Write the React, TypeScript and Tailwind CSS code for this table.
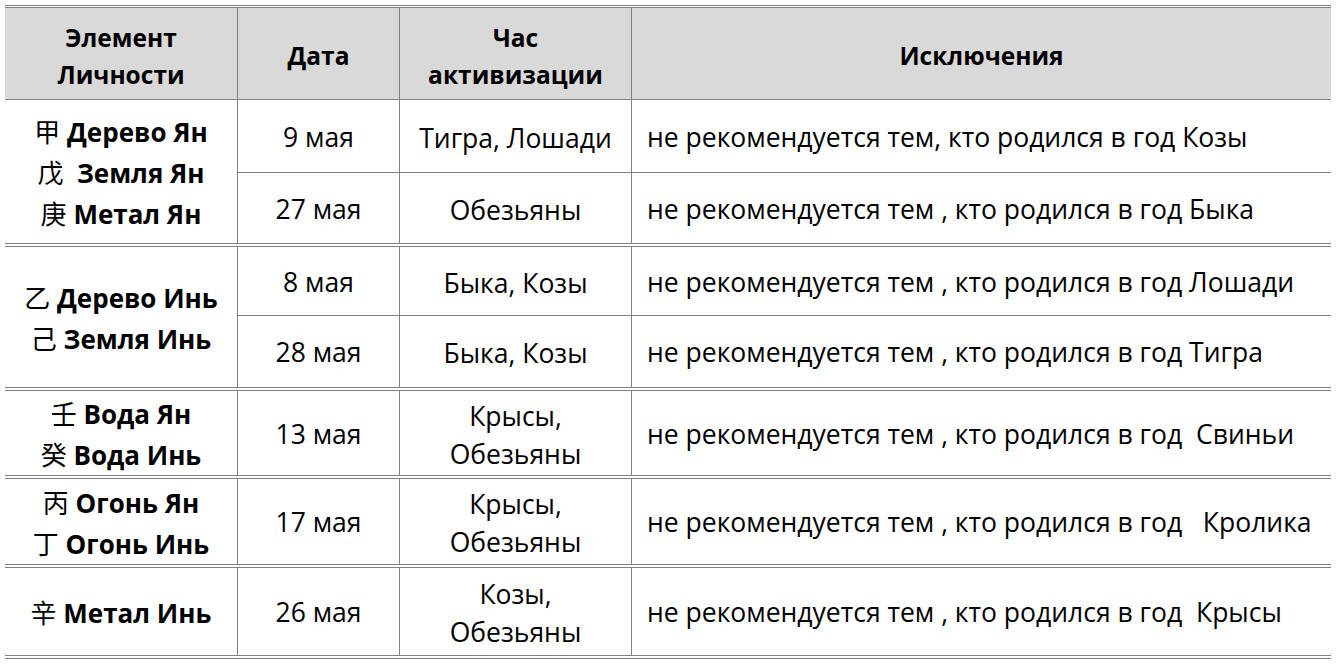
import React from "react";

const FONT = { fontFamily: '"Open Sans", "Noto Sans CJK SC", sans-serif' };

type Sub = { date: string; hour: string[]; exc: string; h: string };
type Group = { el: [string, string][]; subs: Sub[] };

const groups: Group[] = [
  {
    el: [
      ["甲", " Дерево Ян"],
      ["戊", "  Земля Ян"],
      ["庚", " Метал Ян"],
    ],
    subs: [
      { date: "9 мая", hour: ["Тигра, Лошади"], exc: "не рекомендуется тем, кто родился в год Козы", h: "h-[73px] border-b" },
      { date: "27 мая", hour: ["Обезьяны"], exc: "не рекомендуется тем , кто родился в год Быка", h: "h-[70px]" },
    ],
  },
  {
    el: [
      ["乙", " Дерево Инь"],
      ["己", " Земля Инь"],
    ],
    subs: [
      { date: "8 мая", hour: ["Быка, Козы"], exc: "не рекомендуется тем , кто родился в год Лошади", h: "h-[69px] border-b" },
      { date: "28 мая", hour: ["Быка, Козы"], exc: "не рекомендуется тем , кто родился в год Тигра", h: "h-[71px]" },
    ],
  },
  {
    el: [
      ["壬", " Вода Ян"],
      ["癸", " Вода Инь"],
    ],
    subs: [
      { date: "13 мая", hour: ["Крысы,", "Обезьяны"], exc: "не рекомендуется тем , кто родился в год  Свиньи", h: "h-[84px]" },
    ],
  },
  {
    el: [
      ["丙", " Огонь Ян"],
      ["丁", " Огонь Инь"],
    ],
    subs: [
      { date: "17 мая", hour: ["Крысы,", "Обезьяны"], exc: "не рекомендуется тем , кто родился в год   Кролика", h: "h-[85px]" },
    ],
  },
  {
    el: [["辛", " Метал Инь"]],
    subs: [
      { date: "26 мая", hour: ["Козы,", "Обезьяны"], exc: "не рекомендуется тем , кто родился в год  Крысы", h: "h-[87px]" },
    ],
  },
];

export default function App() {
  return (
    <div className="w-[1336px] h-[664px] bg-white pt-[5px] pl-[5px] text-black" style={FONT}>
      <div className="w-[1326px] border-t-[3px] border-double border-[#808080]">
        {/* Header */}
        <div className="flex h-[92px] bg-[#d9d9d9] border-b border-[#808080] text-[24.5px] font-bold leading-[37px]">
          <div className="w-[233px] border-r border-[#808080] flex items-center justify-center text-center pt-[4px]">
            <div>Элемент<br />Личности</div>
          </div>
          <div className="w-[162px] border-r border-[#808080] flex items-center justify-center pt-[3px]">Дата</div>
          <div className="w-[232px] border-r border-[#808080] flex items-center justify-center text-center pt-[4px]">
            <div>Час<br />активизации</div>
          </div>
          <div className="flex-1 flex items-center justify-center pt-[3px]">Исключения</div>
        </div>
        {groups.map((g, gi) => (
          <div key={gi} className="flex border-b-4 border-double border-[#808080]">
            <div className="w-[233px] border-r border-[#808080] flex items-center justify-center pt-[2px]">
              <div className="text-center leading-[40px] text-[26px] whitespace-pre">
                {g.el.map(([c, t], i) => (
                  <div key={i}>
                    <span className="font-normal" style={{ fontFamily: '"Noto Sans CJK SC", serif' }}>{c}</span>
                    <span className="font-bold">{t}</span>
                  </div>
                ))}
              </div>
            </div>
            <div className="flex-1 flex flex-col">
              {g.subs.map((s, si) => (
                <div key={si} className={`flex ${s.h} border-[#808080] text-[26.5px]`}>
                  <div className="w-[162px] border-r border-[#808080] flex items-center justify-center pt-[3px]">{s.date}</div>
                  <div className="w-[232px] border-r border-[#808080] flex items-center justify-center text-center leading-[38px] pt-[3px]">
                    <div>
                      {s.hour.map((h, hi) => (
                        <div key={hi}>{h}</div>
                      ))}
                    </div>
                  </div>
                  <div className="flex-1 flex items-center pl-[15px] whitespace-pre pt-[3px]">{s.exc}</div>
                </div>
              ))}
            </div>
          </div>
        ))}
      </div>
    </div>
  );
}
